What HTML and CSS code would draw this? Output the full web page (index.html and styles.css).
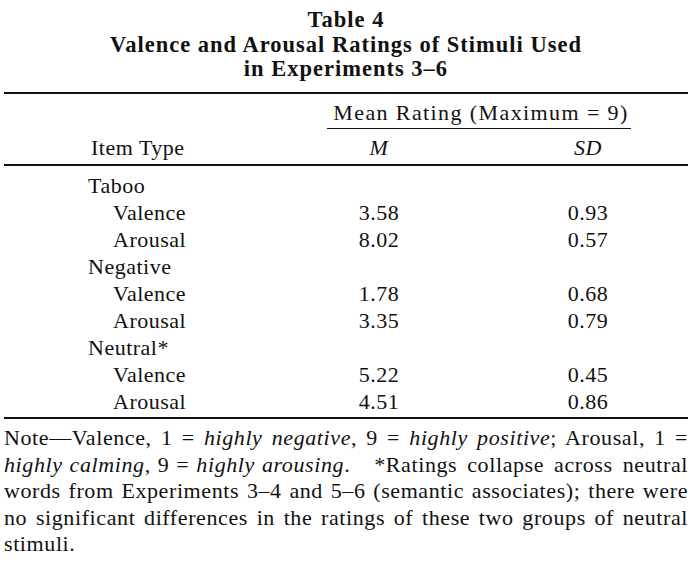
FILE: index.html
```html
<!DOCTYPE html>
<html lang="en">
<head>
<meta charset="utf-8">
<title>Table 4</title>
<link rel="stylesheet" href="styles.css">
</head>
<body>
<div class="page">
  <h1 class="title">Table 4<br>Valence and Arousal Ratings of Stimuli Used<br>in Experiments 3–6</h1>
  <table class="tbl">
    <colgroup><col class="c1"><col class="c2"><col class="c3"></colgroup>
    <thead>
      <tr class="hr1"><th></th><th colspan="2"><span class="spanner">Mean Rating (Maximum = 9)</span></th></tr>
      <tr class="hr2"><th class="item">Item Type</th><th><i>M</i></th><th><i>SD</i></th></tr>
    </thead>
    <tbody>
      <tr class="first"><td class="grp">Taboo</td><td></td><td></td></tr>
      <tr><td class="sub">Valence</td><td>3.58</td><td>0.93</td></tr>
      <tr><td class="sub">Arousal</td><td>8.02</td><td>0.57</td></tr>
      <tr><td class="grp">Negative</td><td></td><td></td></tr>
      <tr><td class="sub">Valence</td><td>1.78</td><td>0.68</td></tr>
      <tr><td class="sub">Arousal</td><td>3.35</td><td>0.79</td></tr>
      <tr><td class="grp">Neutral*</td><td></td><td></td></tr>
      <tr><td class="sub">Valence</td><td>5.22</td><td>0.45</td></tr>
      <tr class="last"><td class="sub">Arousal</td><td>4.51</td><td>0.86</td></tr>
    </tbody>
  </table>
  <p class="note">Note—Valence, 1 = <i>highly negative</i>, 9 = <i>highly positive</i>; Arousal, 1 =<br><span class="tight"><i>highly calming</i>, 9 = <i>highly arousing</i>.</span><span class="gap"></span>*Ratings collapse across neutral<br>words from Experiments 3–4 and 5–6 (semantic associates); there were<br>no significant differences in the ratings of these two groups of neutral<br>stimuli.</p>
</div>
</body>
</html>
```
FILE: styles.css
```css
html, body {
  margin: 0;
  padding: 0;
  background: #ffffff;
}

.page {
  width: 684px;
  padding: 8px 4px 0 4px;
  font-family: "Liberation Serif", "Times New Roman", serif;
  font-size: 22px;
  letter-spacing: 0.5px;
  color: #111111;
}

.title {
  margin: 0;
  font-size: 22.5px;
  font-weight: bold;
  line-height: 24.5px;
  letter-spacing: 1px;
  text-align: center;
}

.tbl {
  width: 684px;
  margin-top: 10px;
  border-collapse: separate;
  border-spacing: 0;
  table-layout: fixed;
  border-top: 2px solid #111111;
  border-bottom: 2px solid #111111;
  line-height: 27.1px;
}

.c1 { width: 266px; }
.c2 { width: 218px; }
.c3 { width: 200px; }

.tbl th,
.tbl td {
  padding: 0;
  font-weight: normal;
  text-align: center;
  vertical-align: baseline;
}

.hr1 th {
  padding-top: 5px;
  line-height: 27px;
}

.spanner {
  display: inline-block;
  padding: 0 2px 2px 6px;
  border-bottom: 1.5px solid #111111;
  letter-spacing: 1.4px;
}

.hr2 th {
  padding-top: 5px;
  padding-bottom: 3px;
  line-height: 27px;
  border-bottom: 2px solid #111111;
}

.hr2 th.item {
  text-align: left;
  padding-left: 87px;
}

.first td { padding-top: 6px; }
.last td { padding-bottom: 2px; }

.tbl td.grp {
  text-align: left;
  padding-left: 84px;
}

.tbl td.sub {
  text-align: left;
  padding-left: 109px;
}

.note {
  margin: 6px 0 0 0;
  line-height: 26.5px;
  letter-spacing: 0.6px;
  text-align: justify;
  text-align-last: justify;
}

.tight {
  word-spacing: -3px;
}

.gap {
  display: inline-block;
  width: 24px;
}
```
